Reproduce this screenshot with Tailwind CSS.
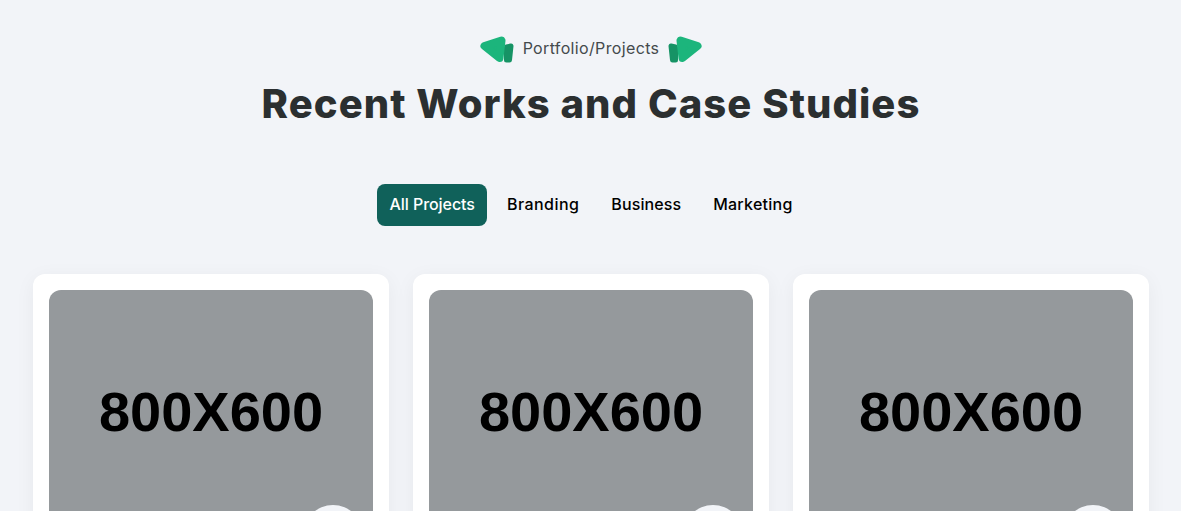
<!DOCTYPE html>
<html lang="en">
<head>
  <meta charset="UTF-8" />
  <title>Portfolio</title>
  <script src="https://cdn.jsdelivr.net/npm/@tailwindcss/browser@4"></script>
</head>
<body class="bg-[#f2f4f8] h-[511px] overflow-hidden font-['Inter',sans-serif]">
  <section class="pl-[33px] pr-[32px] pt-[33px]">
    <div class="flex justify-center items-center gap-2 h-[30px]">
      <svg class="w-9 h-[30px] overflow-visible" viewBox="0 0 36 30">
        <path d="M27.5 14 L32 13 L30.5 27 L27.5 27 Z" fill="#169365" stroke="#169365" stroke-width="5" stroke-linejoin="round" />
        <path d="M5.5 13 L22.5 7.5 L20.5 25 Z" fill="#1cb57c" stroke="#1cb57c" stroke-width="8" stroke-linejoin="round" />
      </svg>
      <span class="text-[#444a4c] text-base leading-none tracking-[0.35px]">Portfolio/Projects</span>
      <svg class="w-9 h-[30px] overflow-visible -scale-x-100" viewBox="0 0 36 30">
        <path d="M27.5 14 L32 13 L30.5 27 L27.5 27 Z" fill="#169365" stroke="#169365" stroke-width="5" stroke-linejoin="round" />
        <path d="M5.5 13 L22.5 7.5 L20.5 25 Z" fill="#1cb57c" stroke="#1cb57c" stroke-width="8" stroke-linejoin="round" />
      </svg>
    </div>
    <h2 class="mt-[11px] text-center text-[40px] leading-[60px] font-extrabold tracking-[1.05px] text-[#2b2f30]">Recent Works and Case Studies</h2>

    <div class="mt-[50px] flex justify-center gap-2 text-base font-medium">
      <button class="h-[42px] px-3 pb-[2px] rounded-lg bg-[#10615a] text-white tracking-[-0.05px]">All Projects</button>
      <button class="h-[42px] px-3 pb-[2px] rounded-lg text-black tracking-[0.45px]">Branding</button>
      <button class="h-[42px] px-3 pb-[2px] rounded-lg text-black tracking-[0.1px]">Business</button>
      <button class="h-[42px] px-3 pb-[2px] rounded-lg text-black tracking-[0.25px]">Marketing</button>
    </div>

    <div class="mt-12 grid grid-cols-3 gap-6">
      <div class="bg-white rounded-xl p-4 shadow-[0_4px_20px_rgba(0,0,0,0.05)]">
        <div class="relative h-[243px] rounded-xl bg-[#95999c] flex items-center justify-center">
          <span class="font-['Liberation_Sans',sans-serif] font-bold text-[56px] leading-none text-black">800X600</span>
          <div class="absolute right-[10px] top-[215px] w-[60px] h-[60px] rounded-full bg-[#f2f4f8]"></div>
        </div>
      </div>
      <div class="bg-white rounded-xl p-4 shadow-[0_4px_20px_rgba(0,0,0,0.05)]">
        <div class="relative h-[243px] rounded-xl bg-[#95999c] flex items-center justify-center">
          <span class="font-['Liberation_Sans',sans-serif] font-bold text-[56px] leading-none text-black">800X600</span>
          <div class="absolute right-[10px] top-[215px] w-[60px] h-[60px] rounded-full bg-[#f2f4f8]"></div>
        </div>
      </div>
      <div class="bg-white rounded-xl p-4 shadow-[0_4px_20px_rgba(0,0,0,0.05)]">
        <div class="relative h-[243px] rounded-xl bg-[#95999c] flex items-center justify-center">
          <span class="font-['Liberation_Sans',sans-serif] font-bold text-[56px] leading-none text-black">800X600</span>
          <div class="absolute right-[10px] top-[215px] w-[60px] h-[60px] rounded-full bg-[#f2f4f8]"></div>
        </div>
      </div>
    </div>
  </section>
</body>
</html>
